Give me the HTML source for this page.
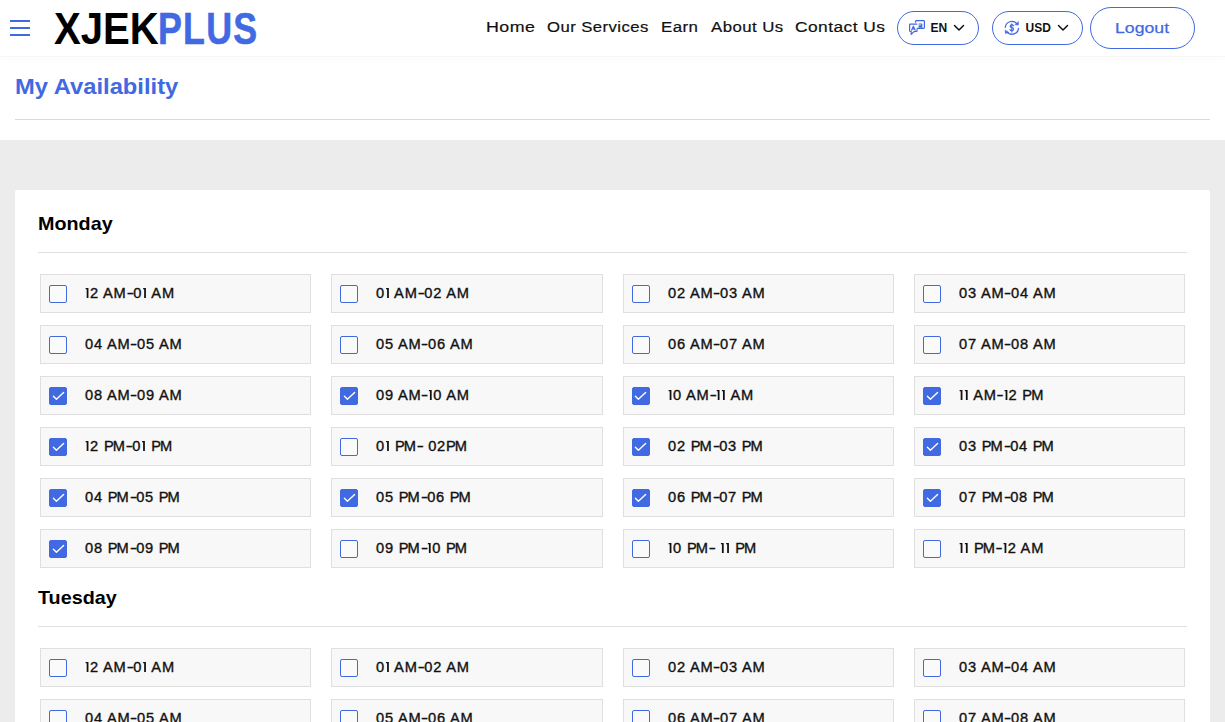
<!DOCTYPE html>
<html><head><meta charset="utf-8">
<style>
*{margin:0;padding:0;box-sizing:border-box}
html,body{width:1225px;height:722px;overflow:hidden;background:#fff;font-family:"Liberation Sans",sans-serif;color:#000}
.abs{position:absolute}
#hdr{position:absolute;left:0;top:0;width:1225px;height:57px;background:#fff;border-bottom:1px solid #f6f6f6;box-shadow:0 5px 6px rgba(0,0,0,0.012)}
.ham{position:absolute;left:10px;width:20px;height:2px;background:#4169e1}
.logo{position:absolute;top:3.5px;font-size:43.6px;font-weight:bold;line-height:50px;white-space:nowrap;transform-origin:0 0}
.nav{position:absolute;top:17.5px;font-size:15.5px;line-height:18px;letter-spacing:0.4px;white-space:nowrap;color:#111;transform-origin:0 0;-webkit-text-stroke:0.2px #111}
.pill{position:absolute;top:11px;height:34px;background:#fff;border:1px solid #4169e1;border-radius:17px}
.pt{position:absolute;top:21px;font-size:12px;font-weight:bold;line-height:15px;color:#111;white-space:nowrap}
.lo{position:absolute;left:1115px;top:17.5px;font-size:15.5px;transform:scaleX(1.14);line-height:20px;color:#4169e1;white-space:nowrap;transform-origin:0 0;-webkit-text-stroke:0.25px #4169e1}
.logout{position:absolute;left:1090px;top:7px;width:105px;height:42px;border:1px solid #4169e1;border-radius:21px;color:#4169e1;font-size:17px;line-height:20px}
.title{position:absolute;left:14.5px;top:73px;font-size:22px;transform:scaleX(1.08);transform-origin:0 0;font-weight:bold;color:#4169e1;line-height:28px;white-space:nowrap}
.hr1{position:absolute;left:15px;top:119px;width:1195px;height:1px;background:#d9d9d9}
#gray{position:absolute;left:0;top:140px;width:1225px;height:582px;background:#ececec}
#card{position:absolute;left:15px;top:190px;width:1195px;height:600px;background:#fff;border-radius:2px}
.day{position:absolute;left:38px;font-size:19px;font-weight:bold;line-height:22px;white-space:nowrap;transform:scaleX(1.04);transform-origin:0 0}
.hr2{position:absolute;left:38px;width:1149px;height:1px;background:#e0e0e0}
.cell{position:absolute;width:271.3px;height:39px;background:#f8f8f8;border:1px solid #dfdfdf}
.cb{position:absolute;left:8px;top:10px;width:18px;height:18px;border:1.5px solid #4169e1;border-radius:2px;background:#fafafa}
.cb.on{background:#4169e1}
.cb svg{position:absolute;left:-1.5px;top:-1.5px}
.lbl{position:absolute;left:44px;top:10px;font-size:14px;line-height:16px;white-space:nowrap;color:#111;transform:scaleX(1.045);letter-spacing:0.75px;transform-origin:0 0;-webkit-text-stroke:0.35px #111}
.lbl s{text-decoration:none;margin-right:-1.7px}
.lbl u{text-decoration:none;display:inline-block;width:6.4px;transform:scaleX(1.45);transform-origin:0 0}
.lbl .one{display:inline-block;vertical-align:baseline;margin-right:0.9px}
</style></head><body>
<div id="hdr">
  <div class="ham" style="top:20px"></div>
  <div class="ham" style="top:27px"></div>
  <div class="ham" style="top:34px"></div>
  <div class="logo" style="left:54px;transform:scaleX(0.92)">XJEK</div>
  <div class="logo" style="left:158px;color:#4169e1;letter-spacing:1.5px;transform:scaleX(0.82);-webkit-text-stroke:0.6px #4169e1">PLUS</div>
  <div class="nav" style="left:486.12px;transform:scaleX(1.1484)">Home</div>
  <div class="nav" style="left:547.32px;transform:scaleX(1.0785)">Our Services</div>
  <div class="nav" style="left:660.82px;transform:scaleX(1.0886)">Earn</div>
  <div class="nav" style="left:710.68px;transform:scaleX(1.0849)">About Us</div>
  <div class="nav" style="left:795.00px;transform:scaleX(1.1208)">Contact Us</div>
  <div class="pill" style="left:897px;width:82px"></div>
  <svg class="abs" style="left:905px;top:16px" width="22" height="22" viewBox="0 0 22 22" fill="none" stroke="#4169e1" stroke-width="1.2" stroke-linejoin="round" stroke-linecap="round">
    <path d="M10.6 6.2 V5.4 Q10.6 4.6 11.4 4.6 H18.6 Q19.4 4.6 19.4 5.4 V11.6 Q19.4 12.4 18.6 12.4 H12.2"/>
    <path d="M14 8 H16.8 V9.8 H14.2 V11.2 H17"/>
    <path d="M11.8 8.2 H5.3 Q4.6 8.2 4.6 8.9 V14.8 Q4.6 15.5 5.3 15.5 H6.2 V18.4 L9.2 15.5 H11.4 Q12 15.5 12 14.9 V13.6"/>
    <path d="M6.6 14.2 L8.4 10.2 L10.2 14.2 M7.3 12.8 H9.5"/>
  </svg>
  <span class="pt" style="left:930.5px">EN</span>
  <svg class="abs" style="left:953px;top:23px" width="12" height="10" viewBox="0 0 12 10"><path d="M1.5 2.5 L6 7 L10.5 2.5" fill="none" stroke="#111" stroke-width="1.5" stroke-linecap="round" stroke-linejoin="round"/></svg>
  <div class="pill" style="left:992px;width:91px"></div>
  <svg class="abs" style="left:1000px;top:16px" width="22" height="22" viewBox="0 0 22 22" fill="none" stroke="#4169e1" stroke-width="1.3" stroke-linecap="round">
    <path d="M5.3 11.3 A6.6 6.6 0 0 1 16.6 7.4"/>
    <path d="M18.4 5.9 L18.3 9.1 L15.2 8.7 Z" fill="#4169e1" stroke-width="0.6" stroke-linejoin="round"/>
    <path d="M18.6 12.4 A6.6 6.6 0 0 1 7.3 16.2"/>
    <path d="M5.2 14.3 L5.4 17.5 L8.6 16.6 Z" fill="#4169e1" stroke-width="0.6" stroke-linejoin="round"/>
    <path d="M11.8 7.8 V16" stroke-width="1.1"/><path d="M13.4 9.7 Q13.1 8.9 11.8 8.9 Q10.2 8.9 10.2 10.2 Q10.2 11.3 11.8 11.6 Q13.5 11.9 13.5 13.2 Q13.5 14.6 11.8 14.6 Q10.4 14.6 10.1 13.7" stroke-width="1.25"/>
  </svg>
  <span class="pt" style="left:1025.5px">USD</span>
  <svg class="abs" style="left:1057px;top:23px" width="12" height="10" viewBox="0 0 12 10"><path d="M1.5 2.5 L6 7 L10.5 2.5" fill="none" stroke="#111" stroke-width="1.5" stroke-linecap="round" stroke-linejoin="round"/></svg>
  <div class="logout"></div>
  <span class="lo">Logout</span>
</div>
<div class="title">My Availability</div>
<div class="hr1"></div>
<div id="gray"></div>
<div id="card"></div>
<div class="day" style="top:213px">Monday</div>
<div class="hr2" style="top:252px"></div>
<div class="cell" style="left:40px;top:274px"><span class="cb"></span><span class="lbl"><svg class="one" width="4" height="10" viewBox="0 0 4 10"><path d="M0.6 0 H3.3 V10 H1.6 V1.3 H0.6 Z" fill="#111"/></svg>2 AM<u>-</u>0<svg class="one" width="4" height="10" viewBox="0 0 4 10"><path d="M0.6 0 H3.3 V10 H1.6 V1.3 H0.6 Z" fill="#111"/></svg> AM</span></div>
<div class="cell" style="left:331.33px;top:274px"><span class="cb"></span><span class="lbl">0<svg class="one" width="4" height="10" viewBox="0 0 4 10"><path d="M0.6 0 H3.3 V10 H1.6 V1.3 H0.6 Z" fill="#111"/></svg> AM<u>-</u>02 AM</span></div>
<div class="cell" style="left:622.67px;top:274px"><span class="cb"></span><span class="lbl">02 AM<u>-</u>03 AM</span></div>
<div class="cell" style="left:914px;top:274px"><span class="cb"></span><span class="lbl">03 AM<u>-</u>04 AM</span></div>
<div class="cell" style="left:40px;top:325px"><span class="cb"></span><span class="lbl">04 AM<u>-</u>05 AM</span></div>
<div class="cell" style="left:331.33px;top:325px"><span class="cb"></span><span class="lbl">05 AM<u>-</u>06 AM</span></div>
<div class="cell" style="left:622.67px;top:325px"><span class="cb"></span><span class="lbl">06 AM<u>-</u>07 AM</span></div>
<div class="cell" style="left:914px;top:325px"><span class="cb"></span><span class="lbl">07 AM<u>-</u>08 AM</span></div>
<div class="cell" style="left:40px;top:376px"><span class="cb on"><svg width="18" height="18" viewBox="0 0 18 18"><path d="M4.4 9.2 L7.4 12.3 L14.6 5.4" fill="none" stroke="#fff" stroke-width="1.4" stroke-linecap="round" stroke-linejoin="round"/></svg></span><span class="lbl">08 AM<u>-</u>09 AM</span></div>
<div class="cell" style="left:331.33px;top:376px"><span class="cb on"><svg width="18" height="18" viewBox="0 0 18 18"><path d="M4.4 9.2 L7.4 12.3 L14.6 5.4" fill="none" stroke="#fff" stroke-width="1.4" stroke-linecap="round" stroke-linejoin="round"/></svg></span><span class="lbl">09 AM<u>-</u><svg class="one" width="4" height="10" viewBox="0 0 4 10"><path d="M0.6 0 H3.3 V10 H1.6 V1.3 H0.6 Z" fill="#111"/></svg>0 AM</span></div>
<div class="cell" style="left:622.67px;top:376px"><span class="cb on"><svg width="18" height="18" viewBox="0 0 18 18"><path d="M4.4 9.2 L7.4 12.3 L14.6 5.4" fill="none" stroke="#fff" stroke-width="1.4" stroke-linecap="round" stroke-linejoin="round"/></svg></span><span class="lbl"><svg class="one" width="4" height="10" viewBox="0 0 4 10"><path d="M0.6 0 H3.3 V10 H1.6 V1.3 H0.6 Z" fill="#111"/></svg>0 AM<u>-</u><svg class="one" width="4" height="10" viewBox="0 0 4 10"><path d="M0.6 0 H3.3 V10 H1.6 V1.3 H0.6 Z" fill="#111"/></svg><svg class="one" width="4" height="10" viewBox="0 0 4 10"><path d="M0.6 0 H3.3 V10 H1.6 V1.3 H0.6 Z" fill="#111"/></svg> AM</span></div>
<div class="cell" style="left:914px;top:376px"><span class="cb on"><svg width="18" height="18" viewBox="0 0 18 18"><path d="M4.4 9.2 L7.4 12.3 L14.6 5.4" fill="none" stroke="#fff" stroke-width="1.4" stroke-linecap="round" stroke-linejoin="round"/></svg></span><span class="lbl"><svg class="one" width="4" height="10" viewBox="0 0 4 10"><path d="M0.6 0 H3.3 V10 H1.6 V1.3 H0.6 Z" fill="#111"/></svg><svg class="one" width="4" height="10" viewBox="0 0 4 10"><path d="M0.6 0 H3.3 V10 H1.6 V1.3 H0.6 Z" fill="#111"/></svg> AM<u>-</u><svg class="one" width="4" height="10" viewBox="0 0 4 10"><path d="M0.6 0 H3.3 V10 H1.6 V1.3 H0.6 Z" fill="#111"/></svg>2 <s>P</s>M</span></div>
<div class="cell" style="left:40px;top:427px"><span class="cb on"><svg width="18" height="18" viewBox="0 0 18 18"><path d="M4.4 9.2 L7.4 12.3 L14.6 5.4" fill="none" stroke="#fff" stroke-width="1.4" stroke-linecap="round" stroke-linejoin="round"/></svg></span><span class="lbl"><svg class="one" width="4" height="10" viewBox="0 0 4 10"><path d="M0.6 0 H3.3 V10 H1.6 V1.3 H0.6 Z" fill="#111"/></svg>2 <s>P</s>M<u>-</u>0<svg class="one" width="4" height="10" viewBox="0 0 4 10"><path d="M0.6 0 H3.3 V10 H1.6 V1.3 H0.6 Z" fill="#111"/></svg> <s>P</s>M</span></div>
<div class="cell" style="left:331.33px;top:427px"><span class="cb"></span><span class="lbl">0<svg class="one" width="4" height="10" viewBox="0 0 4 10"><path d="M0.6 0 H3.3 V10 H1.6 V1.3 H0.6 Z" fill="#111"/></svg> <s>P</s>M<u>-</u> 02<s>P</s>M</span></div>
<div class="cell" style="left:622.67px;top:427px"><span class="cb on"><svg width="18" height="18" viewBox="0 0 18 18"><path d="M4.4 9.2 L7.4 12.3 L14.6 5.4" fill="none" stroke="#fff" stroke-width="1.4" stroke-linecap="round" stroke-linejoin="round"/></svg></span><span class="lbl">02 <s>P</s>M<u>-</u>03 <s>P</s>M</span></div>
<div class="cell" style="left:914px;top:427px"><span class="cb on"><svg width="18" height="18" viewBox="0 0 18 18"><path d="M4.4 9.2 L7.4 12.3 L14.6 5.4" fill="none" stroke="#fff" stroke-width="1.4" stroke-linecap="round" stroke-linejoin="round"/></svg></span><span class="lbl">03 <s>P</s>M<u>-</u>04 <s>P</s>M</span></div>
<div class="cell" style="left:40px;top:478px"><span class="cb on"><svg width="18" height="18" viewBox="0 0 18 18"><path d="M4.4 9.2 L7.4 12.3 L14.6 5.4" fill="none" stroke="#fff" stroke-width="1.4" stroke-linecap="round" stroke-linejoin="round"/></svg></span><span class="lbl">04 <s>P</s>M<u>-</u>05 <s>P</s>M</span></div>
<div class="cell" style="left:331.33px;top:478px"><span class="cb on"><svg width="18" height="18" viewBox="0 0 18 18"><path d="M4.4 9.2 L7.4 12.3 L14.6 5.4" fill="none" stroke="#fff" stroke-width="1.4" stroke-linecap="round" stroke-linejoin="round"/></svg></span><span class="lbl">05 <s>P</s>M<u>-</u>06 <s>P</s>M</span></div>
<div class="cell" style="left:622.67px;top:478px"><span class="cb on"><svg width="18" height="18" viewBox="0 0 18 18"><path d="M4.4 9.2 L7.4 12.3 L14.6 5.4" fill="none" stroke="#fff" stroke-width="1.4" stroke-linecap="round" stroke-linejoin="round"/></svg></span><span class="lbl">06 <s>P</s>M<u>-</u>07 <s>P</s>M</span></div>
<div class="cell" style="left:914px;top:478px"><span class="cb on"><svg width="18" height="18" viewBox="0 0 18 18"><path d="M4.4 9.2 L7.4 12.3 L14.6 5.4" fill="none" stroke="#fff" stroke-width="1.4" stroke-linecap="round" stroke-linejoin="round"/></svg></span><span class="lbl">07 <s>P</s>M<u>-</u>08 <s>P</s>M</span></div>
<div class="cell" style="left:40px;top:529px"><span class="cb on"><svg width="18" height="18" viewBox="0 0 18 18"><path d="M4.4 9.2 L7.4 12.3 L14.6 5.4" fill="none" stroke="#fff" stroke-width="1.4" stroke-linecap="round" stroke-linejoin="round"/></svg></span><span class="lbl">08 <s>P</s>M<u>-</u>09 <s>P</s>M</span></div>
<div class="cell" style="left:331.33px;top:529px"><span class="cb"></span><span class="lbl">09 <s>P</s>M<u>-</u><svg class="one" width="4" height="10" viewBox="0 0 4 10"><path d="M0.6 0 H3.3 V10 H1.6 V1.3 H0.6 Z" fill="#111"/></svg>0 <s>P</s>M</span></div>
<div class="cell" style="left:622.67px;top:529px"><span class="cb"></span><span class="lbl"><svg class="one" width="4" height="10" viewBox="0 0 4 10"><path d="M0.6 0 H3.3 V10 H1.6 V1.3 H0.6 Z" fill="#111"/></svg>0 <s>P</s>M<u>-</u> <svg class="one" width="4" height="10" viewBox="0 0 4 10"><path d="M0.6 0 H3.3 V10 H1.6 V1.3 H0.6 Z" fill="#111"/></svg><svg class="one" width="4" height="10" viewBox="0 0 4 10"><path d="M0.6 0 H3.3 V10 H1.6 V1.3 H0.6 Z" fill="#111"/></svg> <s>P</s>M</span></div>
<div class="cell" style="left:914px;top:529px"><span class="cb"></span><span class="lbl"><svg class="one" width="4" height="10" viewBox="0 0 4 10"><path d="M0.6 0 H3.3 V10 H1.6 V1.3 H0.6 Z" fill="#111"/></svg><svg class="one" width="4" height="10" viewBox="0 0 4 10"><path d="M0.6 0 H3.3 V10 H1.6 V1.3 H0.6 Z" fill="#111"/></svg> <s>P</s>M<u>-</u><svg class="one" width="4" height="10" viewBox="0 0 4 10"><path d="M0.6 0 H3.3 V10 H1.6 V1.3 H0.6 Z" fill="#111"/></svg>2 AM</span></div>
<div class="day" style="top:587px">Tuesday</div>
<div class="hr2" style="top:626px"></div>
<div class="cell" style="left:40px;top:648px"><span class="cb"></span><span class="lbl"><svg class="one" width="4" height="10" viewBox="0 0 4 10"><path d="M0.6 0 H3.3 V10 H1.6 V1.3 H0.6 Z" fill="#111"/></svg>2 AM<u>-</u>0<svg class="one" width="4" height="10" viewBox="0 0 4 10"><path d="M0.6 0 H3.3 V10 H1.6 V1.3 H0.6 Z" fill="#111"/></svg> AM</span></div>
<div class="cell" style="left:331.33px;top:648px"><span class="cb"></span><span class="lbl">0<svg class="one" width="4" height="10" viewBox="0 0 4 10"><path d="M0.6 0 H3.3 V10 H1.6 V1.3 H0.6 Z" fill="#111"/></svg> AM<u>-</u>02 AM</span></div>
<div class="cell" style="left:622.67px;top:648px"><span class="cb"></span><span class="lbl">02 AM<u>-</u>03 AM</span></div>
<div class="cell" style="left:914px;top:648px"><span class="cb"></span><span class="lbl">03 AM<u>-</u>04 AM</span></div>
<div class="cell" style="left:40px;top:699px"><span class="cb"></span><span class="lbl">04 AM<u>-</u>05 AM</span></div>
<div class="cell" style="left:331.33px;top:699px"><span class="cb"></span><span class="lbl">05 AM<u>-</u>06 AM</span></div>
<div class="cell" style="left:622.67px;top:699px"><span class="cb"></span><span class="lbl">06 AM<u>-</u>07 AM</span></div>
<div class="cell" style="left:914px;top:699px"><span class="cb"></span><span class="lbl">07 AM<u>-</u>08 AM</span></div>
</body></html>
